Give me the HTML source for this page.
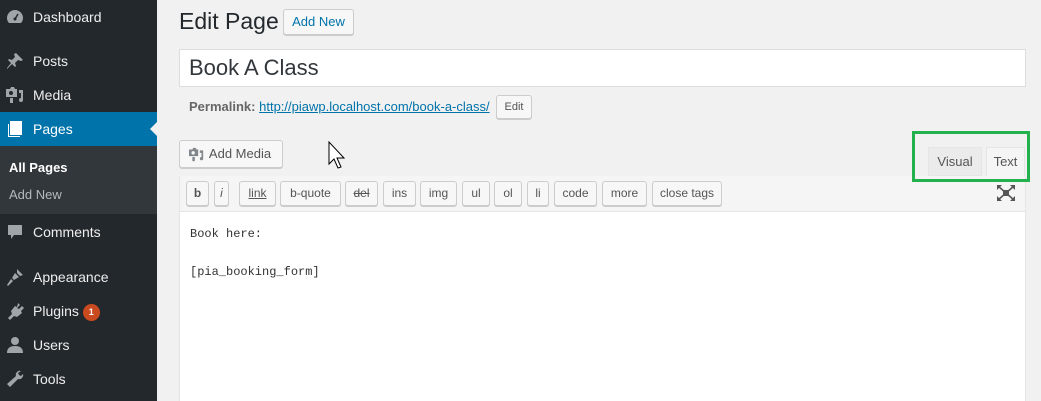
<!DOCTYPE html>
<html style="width:1041px;height:401px;overflow:hidden"><head><meta charset="utf-8"><style>
*{box-sizing:border-box;margin:0;padding:0}
body{width:1041px;height:401px;overflow:hidden;background:#f1f1f1;font-family:"Liberation Sans",sans-serif;position:relative}
.sb{position:absolute;left:0;top:0;width:157px;height:401px;background:#23282d}
.it{position:absolute;left:0;width:157px;height:34px;color:#eee;font-size:14px;line-height:34px;padding-left:33px}
.ic{position:absolute;left:5px;top:7px;width:20px;height:20px}
.cur{background:#0073aa;color:#fff}
.sub{position:absolute;left:0;top:146px;width:157px;height:68px;background:#32373c}
.sub div{position:absolute;left:9px;font-size:13px}
.btn{position:absolute;border:1px solid #ccc;background:#f7f7f7;border-radius:3px;font-size:13px;color:#555;text-align:center;box-shadow:0 1px 0 #ccc}
.tb{position:absolute;top:181px;height:25px;line-height:23px;border:1px solid #ccc;background:#f7f7f7;border-radius:3px;font-size:12px;color:#555;text-align:center;box-shadow:0 1px 0 #ccc}
</style></head><body>
<div class="sb">
 <div class="it" style="top:0">Dashboard<svg class="ic" viewBox="0 0 20 20"><path fill="#a0a5aa" d="M10 3a8 8 0 0 0-8 8c0 2 .7 3.6 2 5h12c1.3-1.4 2-3 2-5a8 8 0 0 0-8-8z"/><circle cx="10" cy="12" r="1.5" fill="#23282d"/><path stroke="#23282d" stroke-width="1.5" d="M10 12l3-5"/></svg></div>
 <div class="it" style="top:44px">Posts<svg class="ic" viewBox="0 0 20 20"><path fill="#a0a5aa" d="M11 2l7 7-2 1-3-1-3 3 1 3-1 1-3-3-5 5 0-1 4-5-3-3 1-1 3 1 3-3-1-3z"/></svg></div>
 <div class="it" style="top:78px">Media<svg class="ic" viewBox="0 0 20 20"><path fill="#a0a5aa" d="M1 4h4l1-2h3l1 2h2v8H1z M14 5h4v10a2 2 0 1 1-2-2V8h-2z"/><circle cx="6" cy="8" r="2" fill="#23282d"/><path fill="#a0a5aa" d="M5 13h3v5H5z"/></svg></div>
 <div class="it cur" style="top:112px">Pages<svg class="ic" viewBox="0 0 20 20"><path fill="#fff" d="M5 2h12v14H5z"/><path fill="#fff" d="M3 5h1v12h11v1H3z"/></svg><div style="position:absolute;right:0;top:10px;border:7px solid transparent;border-right-color:#f1f1f1;border-left:0"></div></div>
 <div class="sub"><div style="top:14px;color:#fff;font-weight:bold">All Pages</div><div style="top:41px;color:#b4b9be">Add New</div></div>
 <div class="it" style="top:215px">Comments<svg class="ic" viewBox="0 0 20 20"><path fill="#a0a5aa" d="M3 3h14v10H9l-3 4v-4H3z"/></svg></div>
 <div class="it" style="top:260px">Appearance<svg class="ic" viewBox="0 0 20 20"><path fill="#a0a5aa" d="M12 2l6 6-3 1-3-3zM10 6l4 4-5 3-2-2zM6 12l2 2-5 5-1-1z"/></svg></div>
 <div class="it" style="top:294px">Plugins <span style="display:inline-block;width:17px;height:17px;border-radius:9px;background:#ca4a1f;color:#fff;font-size:9px;line-height:17px;text-align:center;vertical-align:1px;font-weight:bold">1</span><svg class="ic" viewBox="0 0 20 20"><path fill="#a0a5aa" d="M13 2l2 2-3 3 2 1 3-3 2 2-3 3 1 2-5 4-3-1-4 4-2-2 4-4-1-3 4-5 2 1z"/></svg></div>
 <div class="it" style="top:328px">Users<svg class="ic" viewBox="0 0 20 20"><circle cx="10" cy="6" r="4" fill="#a0a5aa"/><path fill="#a0a5aa" d="M2 18c0-5 3-7 8-7s8 2 8 7z"/></svg></div>
 <div class="it" style="top:362px">Tools<svg class="ic" viewBox="0 0 20 20"><path fill="#a0a5aa" d="M16 2a4 4 0 0 0-5 5L2 15l3 3 8-8a4 4 0 0 0 5-5l-2 2-2-1-1-2z"/></svg></div>
</div>

<div style="position:absolute;left:179px;top:8px;font-size:23px;color:#23282d">Edit Page</div>
<div class="btn" style="left:283px;top:9px;width:71px;height:26px;line-height:24px;color:#0073aa;font-size:13px">Add New</div>
<div style="position:absolute;left:179px;top:49px;width:847px;height:38px;background:#fff;border:1px solid #ddd;font-size:22px;line-height:36px;padding-left:9px;color:#32373c">Book A Class</div>
<div style="position:absolute;left:189px;top:99px;font-size:13px;color:#666"><b>Permalink:</b> <span style="color:#0073aa;text-decoration:underline">http://piawp.localhost.com/book-a-class/</span></div>
<div class="btn" style="left:496px;top:95px;width:36px;height:24px;line-height:22px;font-size:11px">Edit</div>
<div class="btn" style="left:179px;top:140px;width:104px;height:28px;line-height:26px;padding-left:18px"><svg style="position:absolute;left:8px;top:6px" width="17" height="15" viewBox="0 0 20 18"><path fill="#82878c" d="M1 3h4l1-2h3l1 2h2v8H1z M14 4h4v10a2 2 0 1 1-2-2V7h-2z"/><circle cx="6" cy="7" r="2" fill="#f7f7f7"/><path fill="#82878c" d="M5 12h3v5H5z"/></svg>Add Media</div>
<svg style="position:absolute;left:328px;top:141px" width="20" height="32" viewBox="0 0 20 32"><path d="M1 1v22l5-5 4 9 3-1-4-9h7z" fill="#fff" stroke="#000" stroke-width="1"/></svg>

<div style="position:absolute;left:928px;top:147px;width:54px;height:29px;background:#ebebeb;border:1px solid #e5e5e5;font-size:13px;color:#555;text-align:center;line-height:28px">Visual</div>
<div style="position:absolute;left:986px;top:147px;width:39px;height:30px;background:#f5f5f5;border:1px solid #e5e5e5;border-bottom:0;font-size:13px;color:#555;text-align:center;line-height:28px">Text</div>

<div style="position:absolute;left:179px;top:176px;width:847px;height:230px;border:1px solid #e5e5e5;background:#fff"></div>
<div style="position:absolute;left:180px;top:176px;width:845px;height:36px;background:#f5f5f5;border-bottom:1px solid #e5e5e5"></div>
<div class="tb" style="left:186px;width:23px;font-weight:bold">b</div>
<div class="tb" style="left:214px;width:15px;font-style:italic">i</div>
<div class="tb" style="left:239px;width:37px;text-decoration:underline">link</div>
<div class="tb" style="left:280px;width:61px">b-quote</div>
<div class="tb" style="left:345px;width:33px;text-decoration:line-through">del</div>
<div class="tb" style="left:383px;width:33px">ins</div>
<div class="tb" style="left:420px;width:37px">img</div>
<div class="tb" style="left:462px;width:28px">ul</div>
<div class="tb" style="left:494px;width:28px">ol</div>
<div class="tb" style="left:527px;width:22px">li</div>
<div class="tb" style="left:554px;width:43px">code</div>
<div class="tb" style="left:602px;width:45px">more</div>
<div class="tb" style="left:652px;width:70px">close tags</div>
<svg style="position:absolute;left:997px;top:185px" width="18" height="16" viewBox="0 0 18 16"><path fill="#555" d="M6 5h6v6H6zM0 0h5L0 5zM18 0h-5l5 5zM0 16h5L0 11zM18 16h-5l5-5z"/><path stroke="#555" stroke-width="1.5" d="M1 1l16 14M17 1L1 15"/></svg>
<div style="position:absolute;left:190px;top:225px;font-family:'Liberation Mono',monospace;font-size:12px;color:#333;line-height:19px;white-space:pre">Book here:

[pia_booking_form]</div>

<div style="position:absolute;left:912px;top:131px;width:118px;height:51px;border:3px solid #22b14c"></div>
</body></html>
